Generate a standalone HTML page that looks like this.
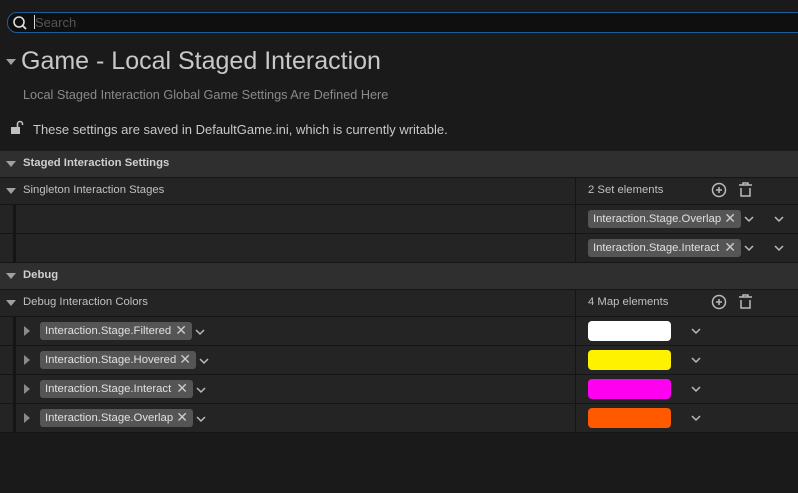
<!DOCTYPE html>
<html><head><meta charset="utf-8"><style>
*{box-sizing:border-box;margin:0;padding:0}
body{width:798px;height:493px;background:#1a1a1a;font-family:"Liberation Sans",sans-serif;color:#c0c0c0;position:relative;overflow:hidden}
.a{position:absolute}
.search{left:7px;top:12px;width:800px;height:21px;border:1px solid #1f5d9c;border-radius:10px;background:#0f0f0f}
.row{position:absolute;left:0;width:798px;background:#242424;border-bottom:1px solid #151515}
.hdr{background:#2f2f2f}
.t{position:absolute;font-size:11.3px;color:#c0c0c0;white-space:nowrap}
.b{font-weight:bold;color:#cfcfcf}
.tri{position:absolute;width:0;height:0;border-left:5px solid transparent;border-right:5px solid transparent;border-top:6px solid #a0a0a0}
.tr{position:absolute;width:0;height:0;border-top:5px solid transparent;border-bottom:5px solid transparent;border-left:6px solid #8a8a8a}
.div{position:absolute;left:575px;width:1px;background:#151515}
.chip{position:absolute;height:18px;background:#555;border-radius:3px;font-size:11.3px;color:#e0e0e0;padding:3px 0 0 5px;white-space:nowrap}
.chip span{position:absolute;right:5px;top:0;font-size:14px;color:#ccc}
.stripe{position:absolute;left:13px;width:3px;background:#151515}
.sw{position:absolute;left:588px;width:83px;height:20px;border-radius:4px}
svg{position:absolute}
</style></head><body>
<div class="a search"></div>
<svg style="left:12px;top:15px" width="16" height="16" viewBox="0 0 16 16"><circle cx="7" cy="7" r="5" fill="none" stroke="#ddd" stroke-width="1.6"/><path d="M10.5 10.5L14 14" stroke="#ddd" stroke-width="1.8"/></svg>
<div class="a" style="left:34px;top:15px;width:1px;height:14px;background:#ddd"></div>
<div class="t" style="left:35px;top:15px;font-size:13px;color:#555">Search</div>

<div class="tri" style="left:6px;top:59px"></div>
<div class="t" style="left:21px;top:47px;font-size:25px;color:#c8c8c8">Game - Local Staged Interaction</div>
<div class="t" style="left:23px;top:88px;font-size:12.7px;color:#8a8a8a">Local Staged Interaction Global Game Settings Are Defined Here</div>
<svg style="left:10px;top:120px" width="14" height="15" viewBox="0 0 14 15"><rect x="1" y="7" width="9" height="7" fill="#c0c0c0"/><path d="M7.5 7V4a2.5 2.5 0 0 1 5 0v1" fill="none" stroke="#c0c0c0" stroke-width="1.6"/></svg>
<div class="t" style="left:33px;top:122px;font-size:13px;color:#c8c8c8">These settings are saved in DefaultGame.ini, which is currently writable.</div>

<div class="row hdr" style="top:151px;height:27px"></div>
<div class="tri" style="left:6px;top:161px"></div>
<div class="t b" style="left:23px;top:157px">Staged Interaction Settings</div>

<div class="row" style="top:178px;height:27px"></div>
<div class="tri" style="left:6px;top:188px"></div>
<div class="t" style="left:23px;top:184px">Singleton Interaction Stages</div>
<div class="t" style="left:588px;top:184px">2 Set elements</div>

<div class="row" style="top:205px;height:29px"></div>
<div class="row" style="top:234px;height:29px"></div>
<div class="stripe" style="top:205px;height:58px"></div>
<div class="div" style="top:178px;height:85px"></div>
<div class="chip" style="left:588px;top:210px;width:153px">Interaction.Stage.Overlap<span>✕</span></div>
<div class="chip" style="left:588px;top:239px;width:153px">Interaction.Stage.Interact<span>✕</span></div>

<div class="row hdr" style="top:263px;height:27px"></div>
<div class="tri" style="left:6px;top:273px"></div>
<div class="t b" style="left:23px;top:269px">Debug</div>

<div class="row" style="top:290px;height:27px"></div>
<div class="tri" style="left:6px;top:300px"></div>
<div class="t" style="left:23px;top:296px">Debug Interaction Colors</div>
<div class="t" style="left:588px;top:296px">4 Map elements</div>

<div class="row" style="top:317px;height:29px"></div>
<div class="row" style="top:346px;height:29px"></div>
<div class="row" style="top:375px;height:29px"></div>
<div class="row" style="top:404px;height:29px"></div>
<div class="stripe" style="top:317px;height:116px"></div>
<div class="div" style="top:290px;height:143px"></div>

<div class="tr" style="left:24px;top:326px"></div>
<div class="tr" style="left:24px;top:355px"></div>
<div class="tr" style="left:24px;top:384px"></div>
<div class="tr" style="left:24px;top:413px"></div>
<div class="chip" style="left:40px;top:322px;width:152px">Interaction.Stage.Filtered<span>✕</span></div>
<div class="chip" style="left:40px;top:351px;width:156px">Interaction.Stage.Hovered<span>✕</span></div>
<div class="chip" style="left:40px;top:380px;width:153px">Interaction.Stage.Interact<span>✕</span></div>
<div class="chip" style="left:40px;top:409px;width:153px">Interaction.Stage.Overlap<span>✕</span></div>

<div class="sw" style="top:321px;background:#fff"></div>
<div class="sw" style="top:350px;background:#fff200"></div>
<div class="sw" style="top:379px;background:#ff00f0"></div>
<div class="sw" style="top:408px;background:#ff5a00"></div>

<svg width="798" height="493" style="left:0;top:0" fill="none" stroke="#bbb" stroke-width="1.5">
<g>
<circle cx="719" cy="190" r="6.5"/><path d="M719 187v6M716 190h6"/>
<path d="M739 185h13M743 185v-2h5v2M741 188v8h9v-8"/>
<circle cx="719" cy="302" r="6.5"/><path d="M719 299v6M716 302h6"/>
<path d="M739 297h13M743 297v-2h5v2M741 300v8h9v-8"/>
</g>
<path d="M745 217l4 4 4-4M775 217l4 4 4-4M745 246l4 4 4-4M775 246l4 4 4-4"/>
<path d="M196 330l4 4 4-4M200 359l4 4 4-4M197 388l4 4 4-4M197 417l4 4 4-4"/>
<path d="M692 329l4 4 4-4M692 358l4 4 4-4M692 387l4 4 4-4M692 416l4 4 4-4"/>
</svg>
</body></html>
